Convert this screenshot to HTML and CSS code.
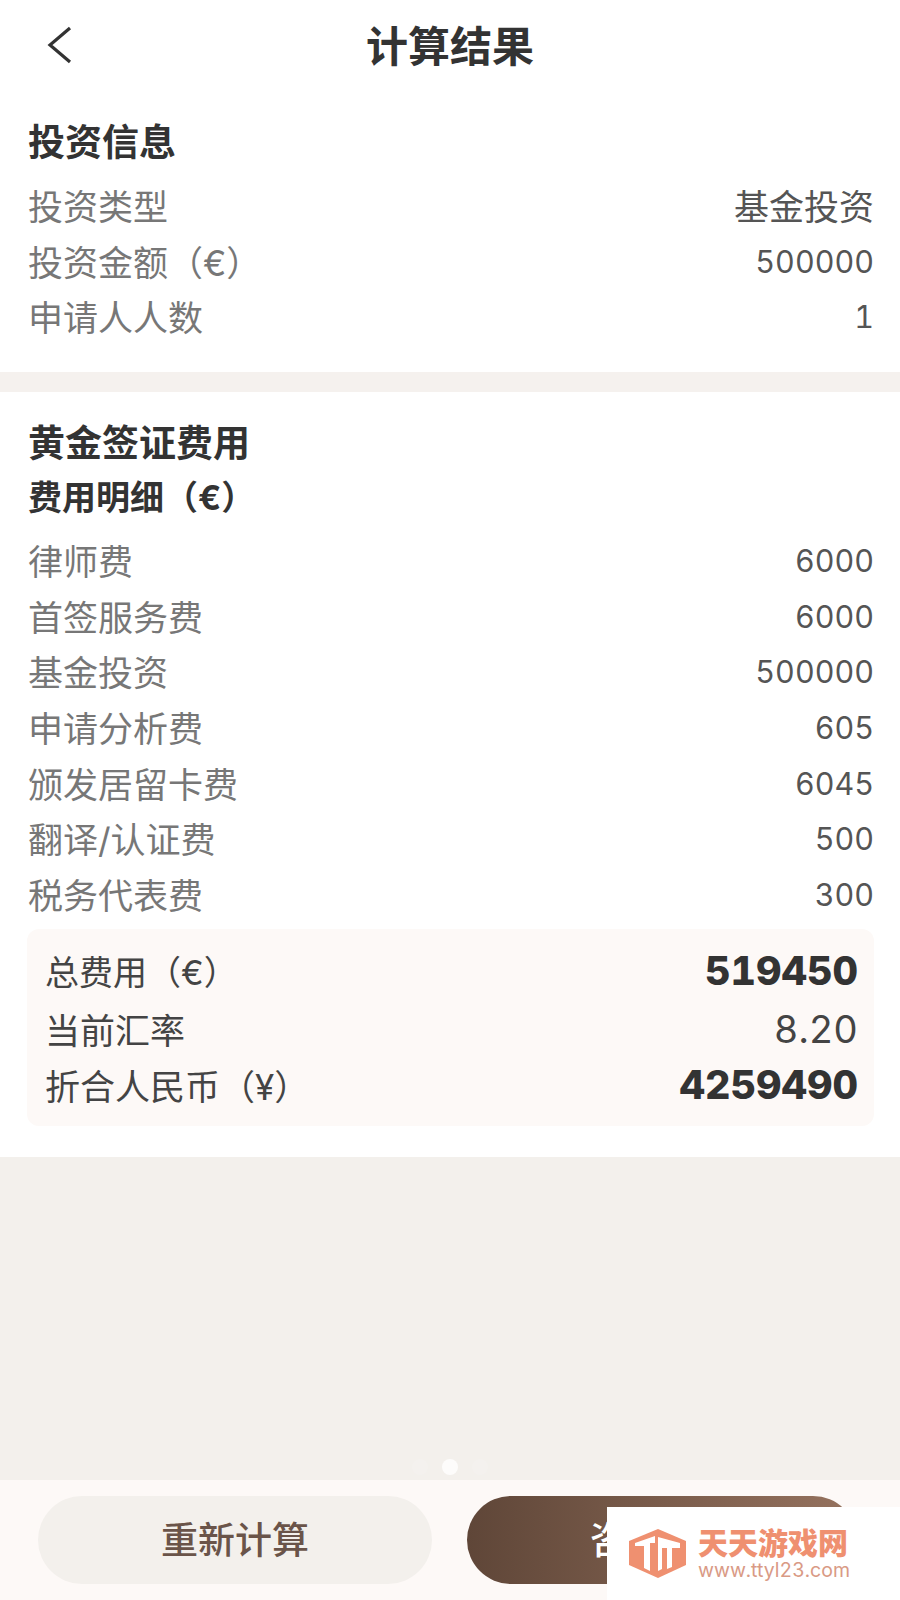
FILE: index.html
```html
<!DOCTYPE html>
<html lang="zh-CN">
<head>
<meta charset="UTF-8" />
<meta name="viewport" content="width=device-width, initial-scale=1" />
<title>计算结果</title>
<link rel="stylesheet" href="styles.css">
</head>
<body>

<div class="page">
  <header class="nav">
    <svg class="back" width="28" height="40" viewBox="0 0 28 40">
      <path d="M25 3 L5 20 L25 37" fill="none" stroke="#333" stroke-width="3.2" />
    </svg>
    <h1>计算结果</h1>
  </header>

  <section class="block block-info">
    <h2>投资信息</h2>
    <div class="row"><span>投资类型</span><b class="cjk-val">基金投资</b></div>
    <div class="row"><span>投资金额（€）</span><b>500000</b></div>
    <div class="row"><span>申请人人数</span><b>1</b></div>
  </section>

  <section class="block block-fees">
    <h2>黄金签证费用</h2>
    <h3>费用明细（€）</h3>
    <div class="row"><span>律师费</span><b>6000</b></div>
    <div class="row"><span>首签服务费</span><b>6000</b></div>
    <div class="row"><span>基金投资</span><b>500000</b></div>
    <div class="row"><span>申请分析费</span><b>605</b></div>
    <div class="row"><span>颁发居留卡费</span><b>6045</b></div>
    <div class="row"><span>翻译/认证费</span><b>500</b></div>
    <div class="row"><span>税务代表费</span><b>300</b></div>

    <div class="total">
      <div class="total-row tr1"><span>总费用（€）</span><b class="big">519450</b></div>
      <div class="total-row tr2"><span>当前汇率</span><b class="rate">8.20</b></div>
      <div class="total-row tr3"><span>折合人民币（¥）</span><b class="big">4259490</b></div>
    </div>
  </section>

  <div class="spacer">
    <div class="dots"><i></i><i class="on"></i><i></i></div>
  </div>

  <footer class="actions">
    <button class="btn btn-light">重新计算</button>
    <button class="btn btn-dark">咨询</button>
  </footer>

  <div class="watermark">
    <svg width="58" height="49" viewBox="0 0 58 49">
      <path d="M29 0 L57 12 V36 L29 49 L0 36 V12 Z" fill="#ef9070" />
      <path d="M6 14 L26 7 V14 H21 V42 L15 39 V17 H6 Z" fill="#fff" />
      <path d="M29 8 L51 14 V19 H43 V38 L38 40 V19 H33 V40 L29 42 Z" fill="#fff" />
    </svg>
    <div class="wm-text">
      <div class="wm-name">天天游戏网</div>
      <div class="wm-url">www.ttyl23.com</div>
    </div>
  </div>
</div>

</body>
</html>
```

FILE: styles.css
```css
* {
  box-sizing: border-box;
}
body {
  margin: 0;
  font-family: Inter, "Noto Sans CJK SC", sans-serif;
  background: #f3f0ec;
  color: #333;
}
.page {
  position: relative;
  width: 900px;
  height: 1600px;
  display: flex;
  flex-direction: column;
  overflow: hidden;
  font-feature-settings: "tnum";
}
.nav {
  height: 92px;
  padding-bottom: 6px;
  background: #fff;
  display: flex;
  align-items: center;
  justify-content: center;
  position: relative;
}
.back {
  position: absolute;
  left: 45px;
  top: 25px;
}
h1 {
  margin: 0;
  font-size: 42px;
  font-weight: 700;
  color: #333;
}
.block {
  background: #fff;
  padding: 0 26px 0 28px;
}
.block-info {
  height: 280px;
  padding-top: 26px;
  margin-bottom: 20px;
}
.block-fees {
  height: 765px;
  padding-top: 24px;
}
h2 {
  margin: 0;
  height: 54px;
  line-height: 56px;
  font-size: 37px;
  font-weight: 700;
  color: #333;
}
.block-info h2 {
  height: 61px;
  line-height: 50px;
}
h3 {
  margin: 0;
  height: 56px;
  line-height: 56px;
  font-size: 34px;
  font-weight: 700;
  color: #333;
}
.row {
  height: 55.6px;
  display: flex;
  justify-content: space-between;
  align-items: center;
  font-size: 35px;
  color: #777;
}
.row span {
  padding-bottom: 4px;
}
.row b {
  font-size: 30.5px;
  font-weight: 400;
  color: #555;
  padding-bottom: 2px;
}
.row .cjk-val {
  font-size: 35px;
  padding-bottom: 4px;
}
.block-fees h3 + .row {
  margin-top: 8px;
}
.total {
  margin: 6px 0 0 -1px;
  height: 197px;
  padding: 14px 16px 0 18px;
  background: #fdf9f7;
  border-radius: 12px;
}
.total-row {
  display: flex;
  justify-content: space-between;
  align-items: center;
  font-size: 35px;
  color: #444;
}
.tr1 {
  height: 56px;
  font-size: 34px;
}
.tr1 span {
  padding-bottom: 2px;
}
.tr2 {
  height: 60px;
}
.tr3 {
  height: 52px;
}
.tr2 span,
.tr3 span {
  padding-bottom: 2px;
}
.big {
  font-size: 39.5px;
  font-weight: 800;
  color: #333;
}
.rate {
  font-size: 38px;
  font-weight: 400;
  color: #444;
}
.block-info + .block-fees {
  box-shadow: 0 -20px 0 #f5f1ee;
}
.spacer {
  flex: 1;
  position: relative;
  background: #f3f0ec;
}
.dots {
  position: absolute;
  left: 0;
  right: 0;
  bottom: 5px;
  display: flex;
  justify-content: center;
  gap: 14px;
}
.dots i {
  width: 16px;
  height: 16px;
  border-radius: 50%;
  background: #f4f1ee;
}
.dots .on {
  background: #fdfcfb;
}
.actions {
  height: 120px;
  background: #fdf9f7;
  padding: 16px 43px 16px 38px;
  display: flex;
  gap: 35px;
}
.btn {
  border: none;
  border-radius: 44px;
  font-family: inherit;
  font-size: 37px;
  font-weight: 500;
  padding-bottom: 6px;
}
.btn-light {
  width: 394px;
  background: #f3f0ec;
  color: #6a5449;
}
.btn-dark {
  flex: 1;
  text-align: left;
  padding-left: 123px;
  background: linear-gradient(90deg, #5f4638, #96735f);
  color: #fff;
}
.watermark {
  position: absolute;
  left: 607px;
  top: 1507px;
  width: 293px;
  height: 93px;
  background: #fff;
  display: flex;
  align-items: center;
  gap: 11px;
  padding: 0 0 0 22px;
}
.wm-name {
  font-size: 30px;
  line-height: 32px;
  font-weight: 900;
  color: #ef9070;
}
.wm-url {
  font-size: 19.5px;
  line-height: 22px;
  color: #d99a85;
}
```
